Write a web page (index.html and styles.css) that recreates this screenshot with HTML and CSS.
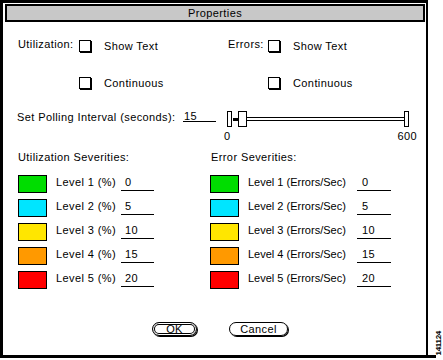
FILE: index.html
```html
<!DOCTYPE html>

<html>
    <head>
        <title>Properties</title>
        <link rel="stylesheet" href="styles.css">
    </head>
    <body>
        <div class = "figure">
            <div class = "window">
                <div class = "title_bar">Properties</div>

                <div class = "options">
                    <span class = "opt_label">Utilization:</span>
                    <span class = "check"></span>
                    <span>Show Text</span>
                    <span class = "opt_label">Errors:</span>
                    <span class = "check"></span>
                    <span>Show Text</span>

                    <span></span>
                    <span class = "check"></span>
                    <span>Continuous</span>
                    <span></span>
                    <span class = "check"></span>
                    <span>Continuous</span>
                </div>

                <div class = "polling">
                    <span class = "polling_label">Set Polling Interval (seconds):</span>
                    <span class = "field polling_field">15</span>
                    <div class = "slider_block">
                        <div class = "slider">
                            <span class = "slider_end"></span>
                            <span class = "slider_fill"></span>
                            <span class = "slider_thumb"></span>
                            <span class = "slider_track"></span>
                            <span class = "slider_end"></span>
                        </div>
                        <div class = "scale"><span>0</span><span>600</span></div>
                    </div>
                </div>

                <div class = "severities">
                    <div class = "sev_col">
                        <div class = "sev_head">Utilization Severities:</div>
                        <div class = "sev_row"><span class = "swatch level1"></span><span class = "sev_label">Level 1 (%)</span><span class = "field sev_field">0</span></div>
                        <div class = "sev_row"><span class = "swatch level2"></span><span class = "sev_label">Level 2 (%)</span><span class = "field sev_field">5</span></div>
                        <div class = "sev_row"><span class = "swatch level3"></span><span class = "sev_label">Level 3 (%)</span><span class = "field sev_field">10</span></div>
                        <div class = "sev_row"><span class = "swatch level4"></span><span class = "sev_label">Level 4 (%)</span><span class = "field sev_field">15</span></div>
                        <div class = "sev_row"><span class = "swatch level5"></span><span class = "sev_label">Level 5 (%)</span><span class = "field sev_field">20</span></div>
                    </div>
                    <div class = "sev_col sev_col_errors">
                        <div class = "sev_head">Error Severities:</div>
                        <div class = "sev_row"><span class = "swatch level1"></span><span class = "sev_label">Level 1 (Errors/Sec)</span><span class = "field sev_field">0</span></div>
                        <div class = "sev_row"><span class = "swatch level2"></span><span class = "sev_label">Level 2 (Errors/Sec)</span><span class = "field sev_field">5</span></div>
                        <div class = "sev_row"><span class = "swatch level3"></span><span class = "sev_label">Level 3 (Errors/Sec)</span><span class = "field sev_field">10</span></div>
                        <div class = "sev_row"><span class = "swatch level4"></span><span class = "sev_label">Level 4 (Errors/Sec)</span><span class = "field sev_field">15</span></div>
                        <div class = "sev_row"><span class = "swatch level5"></span><span class = "sev_label">Level 5 (Errors/Sec)</span><span class = "field sev_field">20</span></div>
                    </div>
                </div>

                <div class = "buttons">
                    <span class = "button button_default">OK</span>
                    <span class = "button">Cancel</span>
                </div>
            </div>
            <span class = "figure_number">141124</span>
        </div>
    </body>
</html>
```

FILE: styles.css
```css
html, body {
    margin: 0;      padding: 0;
    width: 443px;   height: 360px;
    overflow: hidden;

    --ink:      #000000;
    --paper:    #FFFFFF;
    --title:    #C8C8C8;

    color: var(--ink);
    background-color: var(--paper);
    font-family: "Liberation Sans", Arial, sans-serif;
    font-size: 11px;
    letter-spacing: 0.4px;
}

/* Frame */
.figure {
    position: relative;
    width: 436px;   height: 355px;
    border-bottom: solid 3px var(--ink);
}
.window {
    width: 423px;   height: 352px;
    border-left: solid 3px var(--ink);
    border-top: solid 3px var(--ink);
    border-right: solid 2px var(--ink);
}
.title_bar {
    height: 14px;
    margin: 1px 1px 0 2px;
    border: solid 2px var(--ink);
    background-color: var(--title);
    line-height: 15px;
    text-align: center;
}

/* Check boxes */
.options {
    display: grid;
    grid-template-columns: 61px 25px 124px 40px 25px auto;
    grid-template-rows: 13px 13px;
    row-gap: 24px;
    margin-top: 17px;
    padding-left: 15px;
    align-items: center;
    line-height: 13px;
}
.options > span:not(.check) { margin-top: 2px; }
.opt_label { margin-top: -2px !important; }
.check {
    width: 10px;    height: 10px;
    border: solid 1px var(--ink);
    box-shadow: 1px 1px 0 var(--ink);
}

/* Polling interval */
.polling {
    display: flex;
    align-items: flex-start;
    margin-top: 22px;
    padding-left: 14px;
    line-height: 10px;
}
.polling_label {
    width: 166px;
    margin-top: 1px;
}
.field {
    display: block;
    border-bottom: solid 1px var(--ink);
}
.polling_field {
    width: 32px;    height: 10px;
    padding-left: 1px;
}
.slider_block {
    margin-left: 11px;
    width: 182px;
}
.slider {
    display: flex;
    align-items: center;
    height: 16px;
}
.slider_end {
    width: 3px;     height: 14px;
    border: solid 1px var(--ink);
}
.slider_fill {
    width: 5px;     height: 3px;
    margin-left: 1px;
    background-color: var(--ink);
}
.slider_thumb {
    width: 7px;     height: 14px;
    border: solid 1px var(--ink);
}
.slider_track {
    flex: 1;
    height: 2px;
    border-top: solid 1px var(--ink);
    border-bottom: solid 1px var(--ink);
}
.scale {
    display: flex;
    justify-content: space-between;
    width: 193px;
    margin-left: -3px;  margin-top: 4px;
}

/* Severities */
.severities {
    display: flex;
    margin-top: 11px;
    padding-left: 15px;
    line-height: 10px;
}
.sev_col {
    width: 192px;
}
.sev_head {
    margin-bottom: 13px;
}
.sev_col_errors .sev_head { margin-left: 1px; }
.sev_row {
    display: flex;
    align-items: flex-start;
    height: 18px;
    margin-bottom: 6px;
}
.swatch {
    width: 27px;    height: 16px;
    border: solid 1px var(--ink);
}
.level1 { background-color: #00DD00; }
.level2 { background-color: #00E5FF; }
.level3 { background-color: #FFE600; }
.level4 { background-color: #FF9900; }
.level5 { background-color: #FF0000; }
.sev_label {
    width: 65px;
    margin-left: 9px;   margin-top: 2px;
}
.sev_col_errors .sev_label { width: 109px; letter-spacing: 0; }
.sev_field {
    width: 29px;    height: 10px;
    margin-top: 2px;
    padding: 0 0 3px 4px;
}
.sev_col_errors .sev_field { width: 29px; padding-left: 5px; }

/* Buttons */
.buttons {
    display: flex;
    gap: 32px;
    margin-top: 27px;
    padding-left: 149px;
}
.button {
    display: block;
    width: 57px;    height: 12px;
    border: solid 1px var(--ink);
    border-radius: 7px;
    box-shadow: 1px 1px 0 var(--ink);
    line-height: 12px;
    text-align: center;
}
.button_default {
    width: 43px;
    box-shadow: inset 0 0 0 1px var(--paper), inset 0 0 0 2px var(--ink), 1px 1px 0 var(--ink);
}

.figure_number {
    position: absolute;
    left: 435px;    top: 331px;
    writing-mode: vertical-rl;
    transform: rotate(180deg);
    font-size: 8px;
    font-weight: bold;
    letter-spacing: -0.3px;
    line-height: 8px;
}
```
